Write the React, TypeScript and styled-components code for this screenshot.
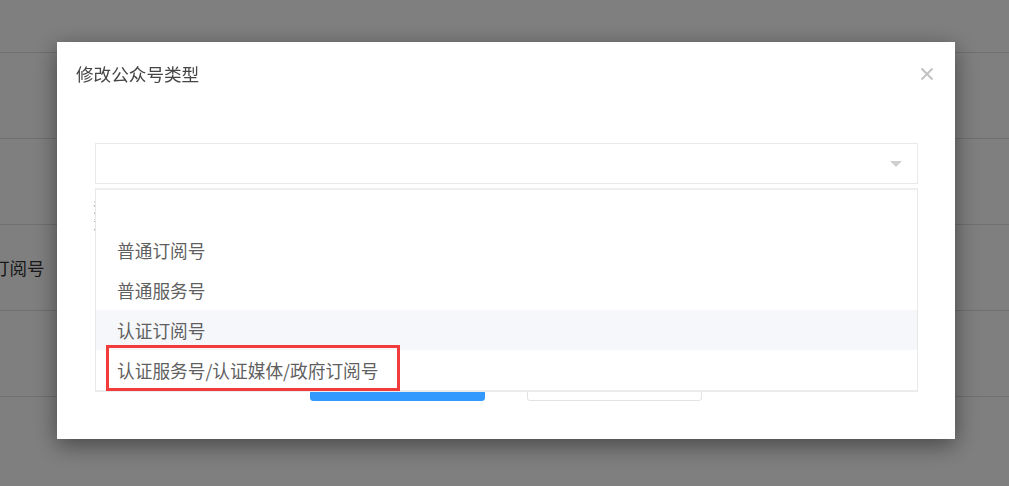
import React from 'react';
import styled, { createGlobalStyle } from 'styled-components';

const GlobalStyle = createGlobalStyle`
  * { box-sizing: border-box; }
  html, body { margin: 0; padding: 0; }
  body {
    width: 1009px;
    height: 486px;
    overflow: hidden;
    font-family: 'Noto Sans CJK SC', 'Noto Sans', sans-serif;
    background: #ffffff;
  }
`;

const S = {
  Page: styled.div`
    width: 1009px;
    height: 486px;
    padding-top: 52px;
    background: #ffffff;
    overflow: hidden;
  `,
  Row: styled.div`
    height: 86px;
    border-top: 1px solid #dedede;
    display: flex;
    align-items: center;
  `,
  Cell: styled.div`
    margin-left: -8px;
    font-size: 17.5px;
    color: #333333;
  `,

  Overlay: styled.div`
    position: fixed;
    inset: 0;
    background: rgba(0, 0, 0, 0.5);
    padding: 42px 0 0 57px;
  `,
  Modal: styled.div`
    width: 898px;
    height: 397px;
    background: #ffffff;
    box-shadow: 0 6px 22px rgba(0, 0, 0, 0.45);
    display: flex;
    flex-direction: column;
  `,
  Header: styled.div`
    display: flex;
    align-items: center;
    justify-content: space-between;
    padding: 20px 21px 0 19px;
    height: 44px;
  `,
  Title: styled.div`
    font-size: 17.6px;
    line-height: 24px;
    color: #454545;
  `,
  Close: styled.button`
    border: none;
    background: none;
    padding: 0;
    width: 14px;
    height: 14px;
    display: flex;
    cursor: pointer;
  `,
  Body: styled.div`
    flex: 1;
    display: flex;
    flex-direction: column;
    padding: 57px 37px 38px 38px;
  `,
  SelectWrap: styled.div`
    position: relative;
  `,
  Select: styled.div`
    height: 41px;
    border: 1px solid #e9e9e9;
    display: flex;
    align-items: center;
    justify-content: flex-end;
    padding-right: 15px;
  `,
  Arrow: styled.span`
    width: 0;
    height: 0;
    border-left: 6px solid transparent;
    border-right: 6px solid transparent;
    border-top: 6px solid #cfcfcf;
  `,
  Dropdown: styled.ul`
    position: absolute;
    top: calc(100% + 4px);
    left: 0;
    right: 0;
    margin: 0;
    padding: 0;
    list-style: none;
    background: #ffffff;
    border: 1px solid #e8e8e8;
    border-top: 2px solid #efefef;
    border-bottom: 2px solid #ececec;
    z-index: 2;
  `,
  Option: styled.li<{ $hover?: boolean }>`
    position: relative;
    height: 40px;
    line-height: 40px;
    padding: 0 21px;
    font-size: 17.7px;
    color: #5f5f5f;
    background: ${(p) => (p.$hover ? '#f5f7fa' : '#ffffff')};
  `,
  Highlight: styled.span`
    position: absolute;
    left: 10px;
    top: -5px;
    width: 294px;
    height: 46px;
    border: 3px solid #f23c3c;
    pointer-events: none;
  `,
  Hint: styled.div`
    margin: 14px 0 0 -2px;
    font-size: 13px;
    line-height: 17px;
    color: #999999;
  `,
  Buttons: styled.div`
    margin-top: auto;
    display: flex;
    justify-content: center;
    gap: 42px;
    padding-right: 2px;
  `,
  Button: styled.button<{ $primary?: boolean }>`
    width: 175px;
    height: 40px;
    border-radius: 3px;
    font-family: inherit;
    font-size: 16px;
    border: 1px solid ${(p) => (p.$primary ? '#3399ff' : '#e2e2e2')};
    background: ${(p) => (p.$primary ? '#3399ff' : '#ffffff')};
    color: ${(p) => (p.$primary ? '#ffffff' : '#606266')};
  `,
};

const options = ['', '普通订阅号', '普通服务号', '认证订阅号', '认证服务号/认证媒体/政府订阅号'];

export default function App() {
  return (
    <>
      <GlobalStyle />
      <S.Page>
        <S.Row />
        <S.Row />
        <S.Row>
          <S.Cell>订阅号</S.Cell>
        </S.Row>
        <S.Row />
        <S.Row />
      </S.Page>
      <S.Overlay>
        <S.Modal>
          <S.Header>
            <S.Title>修改公众号类型</S.Title>
            <S.Close aria-label="关闭">
              <svg width="14" height="14" viewBox="0 0 14 14">
                <path d="M1.5 1.5 L12.5 12.5 M12.5 1.5 L1.5 12.5" stroke="#c2c2c2" strokeWidth="2" />
              </svg>
            </S.Close>
          </S.Header>
          <S.Body>
            <S.SelectWrap>
              <S.Select>
                <S.Arrow />
              </S.Select>
              <S.Dropdown>
                {options.map((o, i) => (
                  <S.Option key={i} $hover={i === 3}>
                    {o}
                    {i === 4 && <S.Highlight />}
                  </S.Option>
                ))}
              </S.Dropdown>
            </S.SelectWrap>
            <S.Hint>
              注
              <br />
              意
            </S.Hint>
            <S.Buttons>
              <S.Button $primary>确定</S.Button>
              <S.Button>取消</S.Button>
            </S.Buttons>
          </S.Body>
        </S.Modal>
      </S.Overlay>
    </>
  );
}
